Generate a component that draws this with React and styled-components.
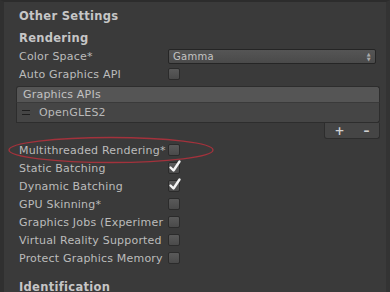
import React from "react";
import styled, { createGlobalStyle } from "styled-components";

const Global = createGlobalStyle`
  html, body {
    margin: 0;
    padding: 0;
    background: #383838;
  }
  body {
    font-family: "DejaVu Sans", "Liberation Sans", sans-serif;
    font-size: 11px;
    color: #b9b9b9;
  }
`;

const Frame = styled.div`
  position: relative;
  width: 390px;
  height: 292px;
  overflow: hidden;
  background: #3a3a3a;
  box-sizing: border-box;
  border-top: 2px solid #2c2c2c;
  border-left: 4px solid #303030;
  border-right: 4px solid #333;
`;

const Inner = styled.div`
  padding: 5px 5px 0 15px;
`;

const SectionTitle = styled.div`
  font-weight: bold;
  font-size: 11.5px;
  letter-spacing: 0.3px;
  color: #c6c6c6;
  height: 18px;
  line-height: 18px;
  margin-top: ${(p) => p.top || 0}px;
`;

const Row = styled.div`
  display: flex;
  align-items: center;
  height: 18px;
`;

const Label = styled.div`
  width: 149px;
  flex: none;
  white-space: nowrap;
  letter-spacing: 0.2px;
  color: #bcbcbc;
`;

const Check = styled.div`
  width: 10px;
  height: 10px;
  border: 1px solid #2b2b2b;
  border-radius: 2px;
  background: linear-gradient(#5a5a5a, #4a4a4a);
  position: relative;
  flex: none;
  svg {
    position: absolute;
    left: -1px;
    top: -4px;
  }
`;

const Dropdown = styled.div`
  flex: 1;
  margin-right: 5px;
  height: 13px;
  border: 1px solid #252525;
  border-radius: 2px;
  background: linear-gradient(#555, #4a4a4a);
  display: flex;
  align-items: center;
  justify-content: space-between;
  padding: 0 4px;
  font-size: 10px;
  letter-spacing: 0.3px;
  color: #c4c4c4;
`;

const Arrows = styled.div`
  display: flex;
  flex-direction: column;
  gap: 1px;
  font-size: 5px;
  line-height: 4px;
  color: #aaa;
`;

const ListBox = styled.div`
  margin: 3px 0 0 -3px;
  width: 364px;
`;

const ListHeader = styled.div`
  height: 15px;
  line-height: 15px;
  background: #555555;
  border: 1px solid #2d2d2d;
  border-bottom-color: #3a3a3a;
  border-radius: 3px 3px 0 0;
  padding-left: 6px;
  letter-spacing: 0.2px;
  color: #c2c2c2;
`;

const ListBody = styled.div`
  height: 19px;
  background: #454545;
  border: 1px solid #2d2d2d;
  border-top: none;
  border-radius: 0 0 3px 0;
  display: flex;
  align-items: center;
  padding-left: 5px;
  letter-spacing: 0.2px;
`;

const Handle = styled.div`
  width: 8px;
  height: 3px;
  border-top: 1px solid #1e1e1e;
  border-bottom: 1px solid #1e1e1e;
  margin-right: 9px;
`;

const ListFooter = styled.div`
  display: flex;
  justify-content: flex-end;
`;

const FooterTab = styled.div`
  width: 54px;
  height: 15px;
  background: #454545;
  border: 1px solid #2d2d2d;
  border-top: none;
  border-radius: 0 0 3px 3px;
  display: flex;
  align-items: center;
  justify-content: space-around;
  color: #d0d0d0;
  font-size: 12px;
  font-weight: bold;
`;

const Gap = styled.div`
  height: ${(p) => p.h}px;
`;

const Ellipse = styled.svg`
  position: absolute;
  left: 1px;
  top: 133px;
`;

const Tick = () => (
  <svg width="14" height="15" viewBox="0 0 14 15">
    <path d="M2.5 8.5 L5.5 11.5 L11.5 2.5" fill="none" stroke="#f4f4f4" strokeWidth="2.4" strokeLinecap="round" strokeLinejoin="round" />
  </svg>
);

const CheckRow = ({ label, checked }) => (
  <Row>
    <Label>{label}</Label>
    <Check>{checked && <Tick />}</Check>
  </Row>
);

export default function App() {
  return (
    <Frame>
      <Global />
      <Inner>
        <SectionTitle>Other Settings</SectionTitle>
        <SectionTitle top={4}>Rendering</SectionTitle>
        <Row>
          <Label>Color Space*</Label>
          <Dropdown>
            <span>Gamma</span>
            <Arrows>
              <span>▲</span>
              <span>▼</span>
            </Arrows>
          </Dropdown>
        </Row>
        <CheckRow label="Auto Graphics API" />
        <ListBox>
          <ListHeader>Graphics APIs</ListHeader>
          <ListBody>
            <Handle />
            <span>OpenGLES2</span>
          </ListBody>
          <ListFooter>
            <FooterTab>
              <span>+</span>
              <span>–</span>
            </FooterTab>
          </ListFooter>
        </ListBox>
        <Gap h={2} />
        <CheckRow label="Multithreaded Rendering*" />
        <CheckRow label="Static Batching" checked />
        <CheckRow label="Dynamic Batching" checked />
        <CheckRow label="GPU Skinning*" />
        <CheckRow label="Graphics Jobs (Experimer" />
        <CheckRow label="Virtual Reality Supported" />
        <CheckRow label="Protect Graphics Memory" />
        <SectionTitle top={11}>Identification</SectionTitle>
      </Inner>
      <Ellipse width="215" height="34" viewBox="0 0 215 34">
        <ellipse cx="106" cy="15" rx="102" ry="12.5" fill="none" stroke="#a3323c" strokeWidth="1.3" />
      </Ellipse>
    </Frame>
  );
}
